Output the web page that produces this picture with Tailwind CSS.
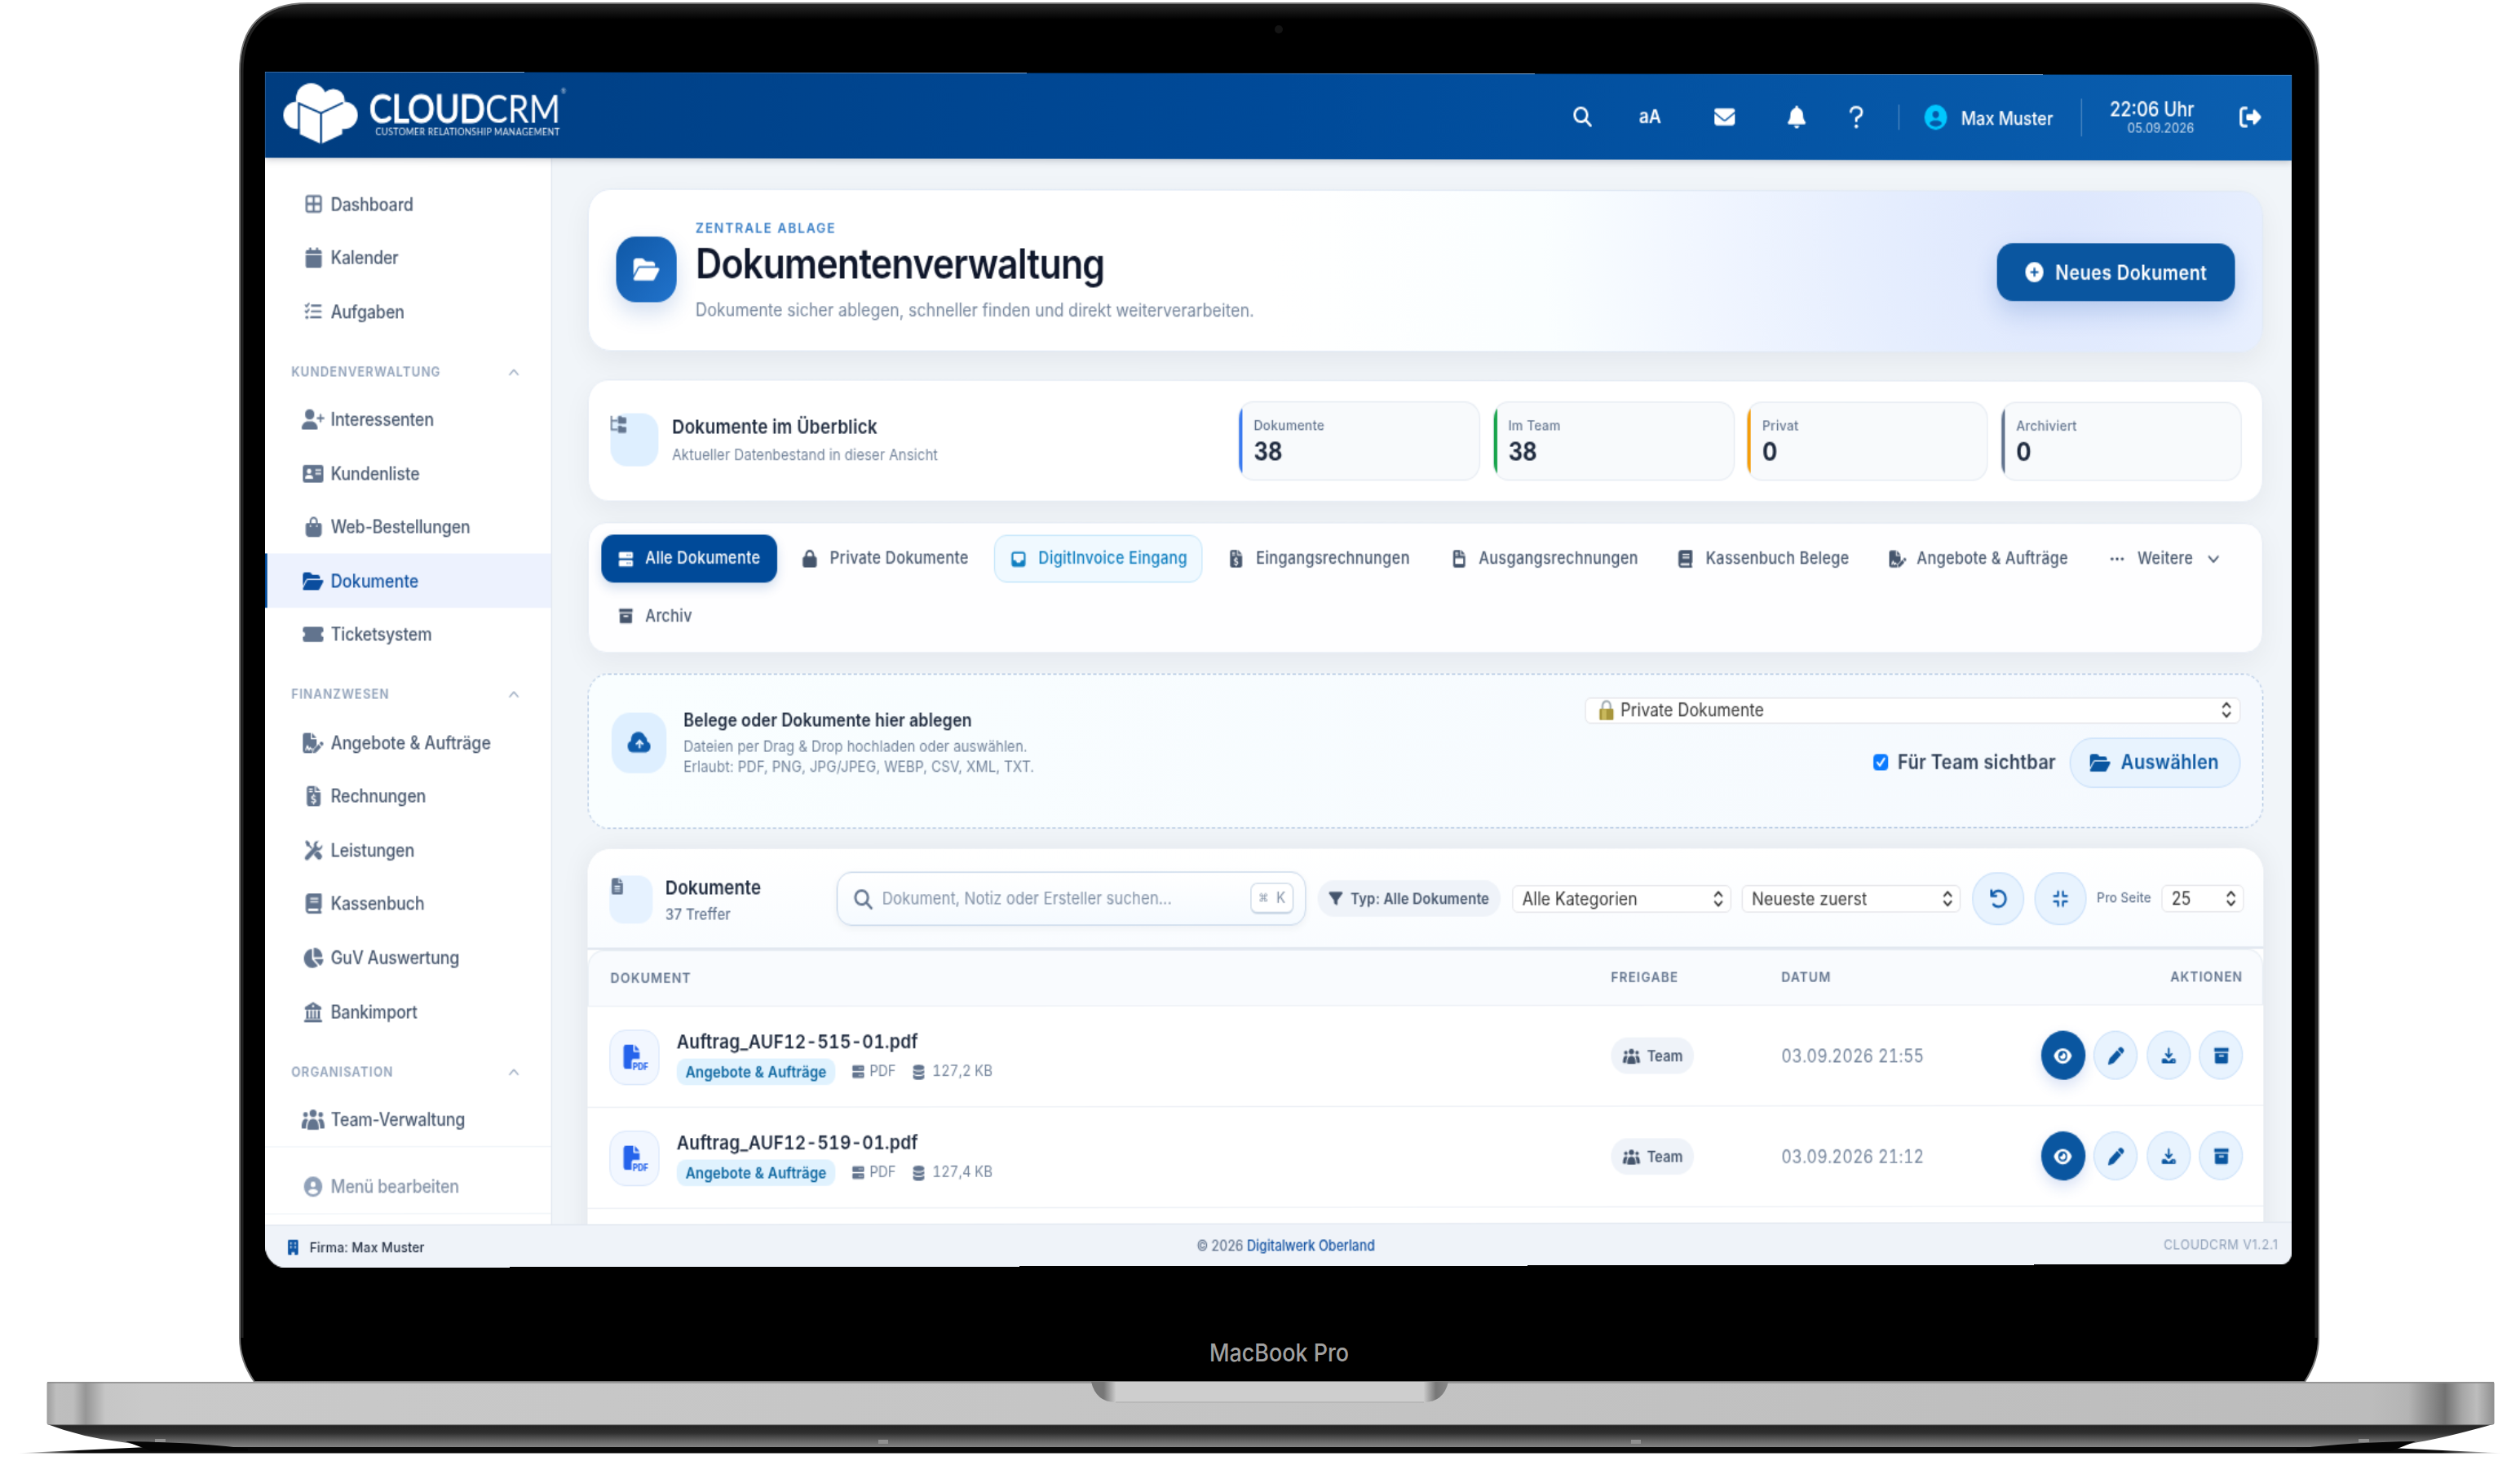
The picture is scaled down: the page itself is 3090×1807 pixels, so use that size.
<!DOCTYPE html>
<html lang="de">
<head>
    <meta charset="UTF-8">
    <meta name="viewport" content="width=device-width, initial-scale=1.0">
    <title>CloudCRM - Dokumentenverwaltung</title>
    <script src="https://cdn.jsdelivr.net/npm/@tailwindcss/browser@4"></script>
</head>
<body class="relative w-[3090px] h-[1807px] overflow-hidden bg-white font-['Inter',sans-serif]">

    <!-- ICONS -->
    <svg class="hidden">
        <symbol id="i-grid" viewBox="0 0 16 16"><path fill="none" stroke="currentColor" stroke-width="1.9" d="M2.6 1.4h10.8a1.2 1.2 0 0 1 1.2 1.2v10.8a1.2 1.2 0 0 1-1.2 1.2H2.6a1.2 1.2 0 0 1-1.2-1.2V2.6a1.2 1.2 0 0 1 1.2-1.2zM8 1.4v13.2M1.4 8h13.2"/></symbol>
        <symbol id="i-calendar" viewBox="0 0 448 512"><path fill="currentColor" d="M96 32V64H48C21.5 64 0 85.5 0 112v48H448V112c0-26.5-21.5-48-48-48H352V32c0-17.7-14.3-32-32-32s-32 14.3-32 32V64H160V32c0-17.7-14.3-32-32-32S96 14.3 96 32zM448 192H0V464c0 26.5 21.5 48 48 48H400c26.5 0 48-21.5 48-48V192z"/></symbol>
        <symbol id="i-tasks" viewBox="0 0 16 16"><path fill="none" stroke="currentColor" stroke-width="1.8" stroke-linecap="round" stroke-linejoin="round" d="M6.8 3h8.3M6.8 8h8.3M6 13h9.1"/><path fill="none" stroke="currentColor" stroke-width="1.4" stroke-linecap="round" stroke-linejoin="round" d="M.8 2.8l1.2 1.2 2-2.6M.8 7.8L2 9l2-2.6"/><circle cx="2.2" cy="13" r="1.3" fill="currentColor"/></symbol>
        <symbol id="i-userplus" viewBox="0 0 640 512"><path fill="currentColor" d="M96 128a128 128 0 1 1 256 0A128 128 0 1 1 96 128zM0 482.3C0 383.8 79.8 304 178.3 304h91.4C368.2 304 448 383.8 448 482.3c0 16.4-13.3 29.7-29.7 29.7H29.7C13.3 512 0 498.7 0 482.3zM504 312V248H440c-13.3 0-24-10.7-24-24s10.7-24 24-24h64V136c0-13.3 10.7-24 24-24s24 10.7 24 24v64h64c13.3 0 24 10.7 24 24s-10.7 24-24 24H552v64c0 13.3-10.7 24-24 24s-24-10.7-24-24z"/></symbol>
        <symbol id="i-card" viewBox="0 0 576 512"><path fill="currentColor" fill-rule="evenodd" d="M64 32C28.7 32 0 60.7 0 96V416c0 35.3 28.7 64 64 64H512c35.3 0 64-28.7 64-64V96c0-35.3-28.7-64-64-64H64zm80 256h64c44.2 0 80 35.8 80 80c0 8.8-7.2 16-16 16H80c-8.8 0-16-7.2-16-16c0-44.2 35.8-80 80-80zm-32-96a64 64 0 1 1 128 0 64 64 0 1 1 -128 0zM352 144H512V186H352zM352 230H512V272H352z"/></symbol>
        <symbol id="i-bag" viewBox="0 0 448 512"><path fill="currentColor" fill-rule="evenodd" d="M160 112c0-35.3 28.7-64 64-64s64 28.7 64 64v48H160V112zm-48 48H48c-26.5 0-48 21.5-48 48V416c0 53 43 96 96 96H352c53 0 96-43 96-96V208c0-26.5-21.5-48-48-48H336V112C336 50.1 285.9 0 224 0S112 50.1 112 112v48zm24 48a24 24 0 1 1 0 48 24 24 0 1 1 0-48zm152 24a24 24 0 1 1 48 0 24 24 0 1 1 -48 0z"/></symbol>
        <symbol id="i-folder" viewBox="0 0 576 512"><path fill="currentColor" d="M88.7 223.8L0 375.8V96C0 60.7 28.7 32 64 32H181.5c17 0 33.3 6.7 45.3 18.7l26.5 26.5c12 12 28.3 18.7 45.3 18.7H416c35.3 0 64 28.7 64 64v32H144c-22.8 0-43.8 12.1-55.3 31.8zm27.6 16.1C122.1 230 132.6 224 144 224H544c11.5 0 22 6.1 27.7 16.1s5.7 22.2-.1 32.1l-112 192C453.9 474 443.4 480 432 480H32c-11.5 0-22-6.1-27.7-16.1s-5.7-22.2 .1-32.1l112-192z"/></symbol>
        <symbol id="i-ticket" viewBox="0 0 576 512"><path fill="currentColor" d="M0 128a64 64 0 0 1 64-64H512a64 64 0 0 1 64 64v64a64 64 0 0 0 0 128v64a64 64 0 0 1-64 64H64a64 64 0 0 1-64-64V320a64 64 0 0 0 0-128z"/></symbol>
        <symbol id="i-filesign" viewBox="0 0 576 512"><path fill="currentColor" fill-rule="evenodd" d="M64 0C28.7 0 0 28.7 0 64V448c0 35.3 28.7 64 64 64H262l24-96 98-100V160H224V0zM256 0V128H384zM64 436l44-110c8-20 34-20 42 0l26 66 12-18c10-14 32-14 42 2l14 22h40v34h-60l-16-24-22 34c-8 12-28 10-34-4l-26-64-24 62z"/><path fill="currentColor" d="M549.8 235.7l14.4 14.4c15.6 15.6 15.6 40.9 0 56.6l-29.4 29.4-71-71 29.4-29.4c15.6-15.6 40.9-15.6 56.6 0zM311.9 417L441.1 287.8l71 71L382.9 487.9c-4.1 4.1-9.2 7-14.9 8.4l-60.1 15c-5.5 1.4-11.2-.2-15.2-4.2s-5.6-9.7-4.2-15.2l15-60.1c1.4-5.6 4.3-10.8 8.4-14.9z"/></symbol>
        <symbol id="i-invoice" viewBox="0 0 384 512"><path fill="currentColor" fill-rule="evenodd" d="M64 0C28.7 0 0 28.7 0 64V448c0 35.3 28.7 64 64 64H320c35.3 0 64-28.7 64-64V160H224V0zM256 0V128H384zM64 64H160V96H64zM64 128H160V160H64zM174 208H210V236C232 239 246 244 254 248L244 282C226 274 206 270 190 270C164 270 154 290 172 302C186 312 262 316 262 374C262 408 238 426 210 432V462H174V433C152 430 134 424 120 418L130 384C150 392 170 398 190 398C222 398 230 374 210 362C192 352 122 346 122 292C122 262 144 243 174 237z"/></symbol>
        <symbol id="i-invoice2" viewBox="0 0 384 512"><path fill="currentColor" fill-rule="evenodd" d="M64 0C28.7 0 0 28.7 0 64V448c0 35.3 28.7 64 64 64H320c35.3 0 64-28.7 64-64V160H224V0zM256 0V128H384zM64 64H160V96H64zM64 128H160V160H64zM64 240H320V400H64z"/></symbol>
        <symbol id="i-tools" viewBox="0 0 512 512"><path fill="currentColor" d="M20 30L62 0l86 66v52l92 92c38-10 80 0 106 28l124 124c26 26 26 68 0 94l-14 14c-26 26-68 26-94 0L238 346c-28-28-38-68-28-106l-92-92H66z"/><path fill="currentColor" stroke="#fff" stroke-width="22" d="M498 104l-74 74-66-18-18-66 76-76c-60-28-134 0-160 60-12 28-14 60-4 90L24 390c-32 32-32 74-4 102s72 28 102-4l220-222c104 26 192-72 156-162z"/></symbol>
        <symbol id="i-book" viewBox="0 0 448 512"><path fill="currentColor" fill-rule="evenodd" d="M96 0C43 0 0 43 0 96V416c0 53 43 96 96 96H384h32c17.7 0 32-14.3 32-32s-14.3-32-32-32V384c17.7 0 32-14.3 32-32V32c0-17.7-14.3-32-32-32H384 96zm0 384H352v64H96c-17.7 0-32-14.3-32-32s14.3-32 32-32zM128 112H352V150H128zM128 196H352V234H128z"/></symbol>
        <symbol id="i-pie" viewBox="0 0 576 512"><path fill="currentColor" d="M304 240V16.6c0-9 7-16.6 16-16.6C443.7 0 544 100.3 544 224c0 9-7.6 16-16.6 16H304zM32 272C32 150.7 122.1 50.3 239 34.3c9.2-1.3 17 6.1 17 15.4V288L412.5 444.5c6.7 6.7 6.2 17.7-1.5 23.1C371.8 495.6 323.8 512 272 512C139.5 512 32 404.6 32 272zm526.4 16c9.3 0 16.6 7.8 15.4 17c-7.7 55.9-34.6 105.6-73.9 142.3c-6 5.6-15.4 5.2-21.2-.7L320 288H558.4z"/></symbol>
        <symbol id="i-bank" viewBox="0 0 16 16"><path fill="currentColor" fill-rule="evenodd" d="M8 0l7.2 4v1.9H.8V4zM8 2.2a1 1 0 1 0 0 2 1 1 0 1 0 0-2zM2 6.5h2v6h1.5v-6h1.8v6h1.4v-6h1.8v6H12v-6h2v6l1 1H1l1-1zM.3 14h15.4v2H.3z"/></symbol>
        <symbol id="i-users" viewBox="0 0 20 16"><g fill="currentColor"><circle cx="10" cy="3" r="3"/><circle cx="3.4" cy="4" r="2.1"/><circle cx="16.6" cy="4" r="2.1"/><path d="M6 16c-.7 0-1-.4-1-1.2C5 10.2 6.8 7.3 10 7.3s5 2.9 5 7.5c0 .8-.3 1.2-1 1.2zM0 14.2C0 9.8 1.4 7.3 3.6 7.3c.8 0 1.5.3 2.1.8C4.4 9.8 3.8 12.2 3.8 15H.8c-.5 0-.8-.3-.8-.8zM20 14.2c0-4.4-1.4-6.9-3.6-6.9-.8 0-1.5.3-2.1.8 1.3 1.7 1.9 4.1 1.9 6.9h3c.5 0 .8-.3.8-.8z"/></g></symbol>
        <symbol id="i-user" viewBox="0 0 512 512"><path fill="currentColor" fill-rule="evenodd" d="M399 384.2C376.9 345.8 335.4 320 288 320H224c-47.4 0-88.9 25.8-111 64.2c35.2 39.2 86.2 63.8 143 63.8s107.8-24.7 143-63.8zM0 256a256 256 0 1 1 512 0A256 256 0 1 1 0 256zm256 16a72 72 0 1 0 0-144 72 72 0 1 0 0 144z"/></symbol>
        <symbol id="i-search" viewBox="0 0 512 512"><path fill="currentColor" fill-rule="evenodd" d="M416 208c0 45.9-14.9 88.3-40 122.7L502.6 457.4c12.5 12.5 12.5 32.8 0 45.3s-32.8 12.5-45.3 0L330.7 376c-34.4 25.2-76.8 40-122.7 40C93.1 416 0 322.9 0 208S93.1 0 208 0S416 93.1 416 208zM208 352a144 144 0 1 0 0-288 144 144 0 1 0 0 288z"/></symbol>
        <symbol id="i-mail" viewBox="0 0 512 512"><path fill="currentColor" d="M48 64C21.5 64 0 85.5 0 112c0 15.1 7.1 29.3 19.2 38.4L236.8 313.6c11.4 8.5 27 8.5 38.4 0L492.8 150.4c12.1-9.1 19.2-23.3 19.2-38.4c0-26.5-21.5-48-48-48H48zM0 176V384c0 35.3 28.7 64 64 64H448c35.3 0 64-28.7 64-64V176L294.4 339.2c-22.8 17.1-54 17.1-76.8 0L0 176z"/></symbol>
        <symbol id="i-bell" viewBox="0 0 448 512"><path fill="currentColor" d="M224 0c-17.7 0-32 14.3-32 32V51.2C119 66 64 130.6 64 208v18.8c0 47-17.3 92.4-48.5 127.6l-7.4 8.3c-8.4 9.4-10.4 22.9-5.3 34.4S19.4 416 32 416H416c12.6 0 24-7.4 29.2-18.9s3.1-25-5.3-34.4l-7.4-8.3C401.3 319.2 384 273.9 384 226.8V208c0-77.4-55-142-128-156.8V32c0-17.7-14.3-32-32-32zm45.3 493.3c12-12 18.7-28.3 18.7-45.3H224 160c0 17 6.7 33.3 18.7 45.3s28.3 18.7 45.3 18.7s33.3-6.7 45.3-18.7z"/></symbol>
        <symbol id="i-question" viewBox="0 0 12 18"><path fill="none" stroke="currentColor" stroke-width="2.1" stroke-linecap="round" stroke-linejoin="round" d="M1.2 4.8C1.2 2.6 3 1.2 5 1.2h1.6c2.3 0 4.2 1.5 4.2 3.8 0 1.6-.9 2.7-2.2 3.4L6 10v2"/><circle cx="6" cy="16.2" r="1.5" fill="currentColor"/></symbol>
        <symbol id="i-logout" viewBox="0 0 512 512"><path fill="currentColor" d="M377.9 105.9L500.7 228.7c7.2 7.2 11.3 17.1 11.3 27.3s-4.1 20.1-11.3 27.3L377.9 406.1c-6.4 6.4-15 9.9-24 9.9c-18.7 0-33.9-15.2-33.9-33.9l0-62.1-128 0c-17.7 0-32-14.3-32-32l0-64c0-17.7 14.3-32 32-32l128 0 0-62.1c0-18.7 15.2-33.9 33.9-33.9c9 0 17.6 3.6 24 9.9zM160 96L96 96c-17.7 0-32 14.3-32 32l0 256c0 17.7 14.3 32 32 32l64 0c17.7 0 32 14.3 32 32s-14.3 32-32 32l-64 0c-53 0-96-43-96-96L0 128C0 75 43 32 96 32l64 0c17.7 0 32 14.3 32 32s-14.3 32-32 32z"/></symbol>
        <symbol id="i-plus" viewBox="0 0 16 16"><path fill="currentColor" fill-rule="evenodd" d="M8 0a8 8 0 1 0 0 16A8 8 0 1 0 8 0zM7.2 4.5h1.6v2.7h2.7v1.6H8.8v2.7H7.2V8.8H4.5V7.2h2.7z"/></symbol>
        <symbol id="i-tree" viewBox="0 0 16 16"><path fill="none" stroke="currentColor" stroke-width="1.4" d="M1 0v12.4h6M1 4.3h6"/><path fill="currentColor" d="M7.5 1.2c0-.5.3-.8.8-.8h2.5l1 1.1H15c.5 0 .8.3.8.8v4c0 .5-.3.8-.8.8H8.3c-.5 0-.8-.3-.8-.8zM7.5 9.6c0-.5.3-.8.8-.8h2.5l1 1.1H15c.5 0 .8.3.8.8v4c0 .5-.3.8-.8.8H8.3c-.5 0-.8-.3-.8-.8z"/></symbol>
        <symbol id="i-server" viewBox="0 0 16 16"><path fill="currentColor" fill-rule="evenodd" d="M2 .8h12a1.5 1.5 0 0 1 1.5 1.5v3.4A1.5 1.5 0 0 1 14 7.2H2A1.5 1.5 0 0 1 .5 5.7V2.3A1.5 1.5 0 0 1 2 .8zM2 8.8h12a1.5 1.5 0 0 1 1.5 1.5v3.4a1.5 1.5 0 0 1-1.5 1.5H2a1.5 1.5 0 0 1-1.5-1.5v-3.4A1.5 1.5 0 0 1 2 8.8zM9 3.3v1.4h1.4V3.3zM11.8 3.3v1.4h1.4V3.3zM9 11.3v1.4h1.4v-1.4zM11.8 11.3v1.4h1.4v-1.4z"/></symbol>
        <symbol id="i-lock" viewBox="0 0 448 512"><path fill="currentColor" fill-rule="evenodd" d="M144 144v48H304V144c0-44.2-35.8-80-80-80s-80 35.8-80 80zM80 192V144C80 64.5 144.5 0 224 0s144 64.5 144 144v48h16c35.3 0 64 28.7 64 64V448c0 35.3-28.7 64-64 64H64c-35.3 0-64-28.7-64-64V256c0-35.3 28.7-64 64-64H80z"/></symbol>
        <symbol id="i-inbox" viewBox="0 0 16 16"><path fill="currentColor" fill-rule="evenodd" d="M3 .5h10A2.5 2.5 0 0 1 15.5 3v10a2.5 2.5 0 0 1-2.5 2.5H3A2.5 2.5 0 0 1 .5 13V3A2.5 2.5 0 0 1 3 .5zM3.2 2.5a.7.7 0 0 0-.7.7V9H5l1.3 2.3h3.4L11 9h2.5V3.2a.7.7 0 0 0-.7-.7z"/></symbol>
        <symbol id="i-archive" viewBox="0 0 16 16"><path fill="currentColor" fill-rule="evenodd" d="M.8.8h14.4v3.6H.8zM1.5 5.4h13v8.3a1.5 1.5 0 0 1-1.5 1.5H3a1.5 1.5 0 0 1-1.5-1.5zM5.5 7.3v1.6h5V7.3z"/></symbol>
        <symbol id="i-dots" viewBox="0 0 16 16"><g fill="currentColor"><circle cx="2" cy="8" r="1.7"/><circle cx="8" cy="8" r="1.7"/><circle cx="14" cy="8" r="1.7"/></g></symbol>
        <symbol id="i-down" viewBox="0 0 10 10"><path fill="none" stroke="currentColor" stroke-width="1.4" stroke-linecap="round" stroke-linejoin="round" d="M1 3l4 4.2L9 3"/></symbol>
        <symbol id="i-up" viewBox="0 0 10 10"><path fill="none" stroke="currentColor" stroke-width="1.2" stroke-linecap="round" stroke-linejoin="round" d="M1 7.2L5 3l4 4.2"/></symbol>
        <symbol id="i-updown" viewBox="0 0 10 16"><path fill="none" stroke="currentColor" stroke-width="1.7" stroke-linecap="round" stroke-linejoin="round" d="M1.5 5.5L5 1.8l3.5 3.7M1.5 10.5L5 14.2l3.5-3.7"/></symbol>
        <symbol id="i-cloud" viewBox="0 0 20 16"><path fill="currentColor" fill-rule="evenodd" d="M4.5 15.5A4.5 4.5 0 0 1 3 6.8 6 6 0 0 1 14.2 3.2a4 4 0 0 1 2 4 4.3 4.3 0 0 1-.7 8.3zM9.2 12.5h1.6V8.6l1.7 1.6 1-1.1L10 5.7 6.5 9.1l1 1.1 1.7-1.6z"/></symbol>
        <symbol id="i-file" viewBox="0 0 384 512"><path fill="currentColor" fill-rule="evenodd" d="M64 0C28.7 0 0 28.7 0 64V448c0 35.3 28.7 64 64 64H320c35.3 0 64-28.7 64-64V160H224V0zM256 0V128H384zM96 240H288V276H96zM96 310H288V346H96zM96 380H288V416H96z"/></symbol>
        <symbol id="i-filter" viewBox="0 0 512 512"><path fill="currentColor" d="M3.9 54.9C10.5 40.9 24.5 32 40 32H472c15.5 0 29.5 8.9 36.1 22.9s4.6 30.5-5.2 42.5L320 320.9V448c0 12.1-6.8 23.2-17.7 28.6s-23.8 4.3-33.5-3l-64-48c-8.1-6-12.8-15.5-12.8-25.6V320.9L9 97.3C-.7 85.4-2.8 68.8 3.9 54.9z"/></symbol>
        <symbol id="i-undo" viewBox="0 0 16 16"><path fill="none" stroke="currentColor" stroke-width="2" stroke-linecap="round" stroke-linejoin="round" d="M1.5 1.5v4.3h4.3M2 5.5a6.3 6.3 0 1 1 1.3 7"/></symbol>
        <symbol id="i-compress" viewBox="0 0 16 16"><path fill="none" stroke="currentColor" stroke-width="2" stroke-linecap="round" stroke-linejoin="round" d="M5.5 1.5v4h-4M10.5 1.5v4h4M5.5 14.5v-4h-4M10.5 14.5v-4h4"/></symbol>
        <symbol id="i-db" viewBox="0 0 14 16"><path fill="currentColor" d="M7 0c3.6 0 6.5 1.1 6.5 2.5v1C13.5 4.9 10.6 6 7 6S.5 4.9.5 3.5v-1C.5 1.1 3.4 0 7 0zM.5 5.5C2 6.7 4.4 7.2 7 7.2s5-.5 6.5-1.7v2.7C13.5 9.6 10.6 10.7 7 10.7S.5 9.6.5 8.2zM.5 10.3C2 11.5 4.4 12 7 12s5-.5 6.5-1.7v3.2C13.5 14.9 10.6 16 7 16S.5 14.9.5 13.5z"/></symbol>
        <symbol id="i-eye" viewBox="0 0 576 512"><path fill="currentColor" fill-rule="evenodd" d="M288 32c-80.8 0-145.5 36.8-192.6 80.6C48.6 156 17.3 208 2.5 243.7c-3.3 7.9-3.3 16.7 0 24.6C17.3 304 48.6 356 95.4 399.4C142.5 443.2 207.2 480 288 480s145.5-36.8 192.6-80.6c46.8-43.5 78.1-95.4 93-131.1c3.3-7.9 3.3-16.7 0-24.6c-14.9-35.7-46.2-87.7-93-131.1C433.5 68.8 368.8 32 288 32zM144 256a144 144 0 1 1 288 0 144 144 0 1 1 -288 0z"/><path fill="currentColor" d="M288 192c0 35.3-28.7 64-64 64c-7.1 0-13.9-1.2-20.3-3.3c-5.5-1.8-11.9 1.6-11.7 7.4c.3 6.9 1.3 13.8 3.2 20.7c13.7 51.2 66.4 81.6 117.6 67.9s81.6-66.4 67.9-117.6c-11.1-41.5-47.8-69.4-88.6-71.1c-5.8-.2-9.2 6.1-7.4 11.7c2.1 6.4 3.3 13.2 3.3 20.3z"/></symbol>
        <symbol id="i-pen" viewBox="0 0 512 512"><path fill="currentColor" d="M362.7 19.3L314.3 67.7 444.3 197.7l48.4-48.4c25-25 25-65.5 0-90.5L453.3 19.3c-25-25-65.5-25-90.5 0zm-71 71L58.6 323.5c-10.4 10.4-18 23.3-22.2 37.4L1 481.2C-1.5 489.7 .8 498.8 7 505s15.3 8.5 23.7 6.1l120.3-35.4c14.1-4.2 27-11.8 37.4-22.2L421.7 220.3 291.7 90.3z"/></symbol>
        <symbol id="i-download" viewBox="0 0 16 16"><path fill="none" stroke="currentColor" stroke-width="1.9" stroke-linecap="round" stroke-linejoin="round" d="M8 1v8M4.8 6.2L8 9.4l3.2-3.2"/><path fill="currentColor" fill-rule="evenodd" d="M2 10.8h2.8L8 13.4l3.2-2.6H14a1.5 1.5 0 0 1 1.5 1.5v1.7A1.5 1.5 0 0 1 14 15.5H2A1.5 1.5 0 0 1 .5 14v-1.7A1.5 1.5 0 0 1 2 10.8zM12.4 12.5v1.4h1.4v-1.4z"/></symbol>
        <symbol id="i-building" viewBox="0 0 12 16"><path fill="currentColor" fill-rule="evenodd" d="M1.5 0h9A1.5 1.5 0 0 1 12 1.5v13a1.5 1.5 0 0 1-1.5 1.5H7.7v-3H4.3v3H1.5A1.5 1.5 0 0 1 0 14.5v-13A1.5 1.5 0 0 1 1.5 0zM2.5 3v1.8h2V3zM7.5 3v1.8h2V3zM2.5 7v1.8h2V7zM7.5 7v1.8h2V7z"/></symbol>
        <symbol id="i-pdf" viewBox="0 0 20 20"><path fill="currentColor" d="M2 0h6.5v4.8a1 1 0 0 0 1 1h4.5v5.5H8.500A1.500 1.500 0 0 0 7 12.800V19H2a2 2 0 0 1-2-2V2a2 2 0 0 1 2-2zM9.800 0l4.200 4.500H9.800z"/></symbol>
    </svg>

    <!-- LAPTOP -->
    <svg class="absolute inset-0" width="3090" height="1807" viewBox="0 0 3090 1807">
        <defs>
            <linearGradient id="deck" gradientUnits="userSpaceOnUse" x1="57" y1="0" x2="3058" y2="0">
                <stop offset="0" stop-color="#9c9c9c"/><stop offset=".004" stop-color="#bebebe"/><stop offset=".011" stop-color="#bdbdbd"/><stop offset=".016" stop-color="#969696"/><stop offset=".024" stop-color="#c6c6c6"/><stop offset=".04" stop-color="#c9c9c9"/><stop offset=".5" stop-color="#c4c4c4"/><stop offset=".95" stop-color="#bcbcbc"/><stop offset=".965" stop-color="#b4b4b4"/><stop offset=".98" stop-color="#727272"/><stop offset=".987" stop-color="#a6a6a6"/><stop offset=".993" stop-color="#bdbdbd"/><stop offset="1" stop-color="#909090"/>
            </linearGradient>
            <linearGradient id="belly" x1="0" y1="0" x2="0" y2="1"><stop offset="0" stop-color="#505050"/><stop offset=".08" stop-color="#252525"/><stop offset=".35" stop-color="#2e2e2e"/><stop offset=".7" stop-color="#666"/><stop offset="1" stop-color="#8c8c8c"/></linearGradient>
            <linearGradient id="notch"><stop offset="0" stop-color="#777"/><stop offset=".035" stop-color="#777"/><stop offset=".07" stop-color="#cecece"/><stop offset=".93" stop-color="#cecece"/><stop offset=".965" stop-color="#777"/><stop offset="1" stop-color="#888"/></linearGradient>
            <linearGradient id="floor"><stop offset="0" stop-color="#000" stop-opacity="0"/><stop offset=".025" stop-color="#0a0a0a"/><stop offset=".975" stop-color="#0a0a0a"/><stop offset="1" stop-color="#000" stop-opacity="0"/></linearGradient>
            <linearGradient id="lid" x1="0" y1="0" x2="0" y2="1"><stop offset="0" stop-color="#2a2a2a"/><stop offset=".012" stop-color="#000"/></linearGradient>
        </defs>
        <path fill="url(#lid)" stroke="#777" stroke-width="2" d="M312 1694Q294 1668 294 1640V88Q294 4 378 4H2760Q2843 4 2843 88V1640Q2843 1668 2826 1694z"/>
        <path fill="none" stroke="#222" stroke-width="3" d="M297 1640V88Q297 7 378 7H2760Q2840 7 2840 88V1640"/>
        <circle cx="1568" cy="36" r="5" fill="#141414"/>
        <path fill="url(#belly)" d="M58 1746H3057Q3000 1762 2965 1768L2925 1776H200L150 1768Q100 1762 58 1746z"/>
        <path fill="url(#floor)" d="M20 1781.5L180 1774H2910L3070 1781.5z"/>
        <path fill="#050505" d="M154 1767Q240 1768 304 1776V1779H186zM2962 1767Q2880 1768 2816 1776V1779H2932z"/>
        <rect x="57.5" y="1694" width="3001" height="52.5" rx="2" fill="url(#deck)"/>
        <path stroke="#8a8a8a" stroke-width="1.5" d="M58 1695H3058"/>
        <path fill="url(#notch)" d="M1338 1694H1776Q1770 1719 1746 1719H1368Q1344 1719 1338 1694z"/>
        <path stroke="#b4b4b4" stroke-width="1.5" d="M1368 1719H1746"/>
        <g fill="#8f8f8f"><rect x="190" y="1764" width="13" height="4"/><rect x="1077" y="1765" width="12" height="5"/><rect x="2000" y="1765" width="12" height="5"/><rect x="2892" y="1764" width="13" height="4"/></g>
        <text x="1483" y="1669" font-size="30" font-weight="500" fill="#a0a0a0" textLength="171" lengthAdjust="spacingAndGlyphs" class="font-['Inter',sans-serif]">MacBook Pro</text>
    </svg>

    <!-- SCREEN -->
    <div class="absolute left-[325px] top-[88px] w-[1780px] h-[946px] origin-top-left [transform:matrix3d(1.40374,0.0022595,0,0.000003084,0,1.54968,0,0,0,0,1,0,0,0,0,1)] overflow-hidden rounded-bl-[18px] rounded-br-[9px] bg-[#f1f5f9] flex flex-col text-slate-800">

        <!-- HEADER -->
        <header class="relative z-10 h-[68px] shrink-0 flex items-center pl-4 pr-[26px] text-white bg-gradient-to-r from-[#003d80] via-[#004a99] to-[#0b5fb0] shadow-[0_1px_6px_rgba(15,23,42,0.25)]">
            <svg class="mb-[2px] w-[65px] h-[48px]" viewBox="0 0 91 75" preserveAspectRatio="none">
                <g fill="#fff"><ellipse cx="34" cy="19" rx="18.500" ry="19"/><ellipse cx="61" cy="21" rx="14" ry="14"/><ellipse cx="17" cy="39.500" rx="17" ry="17"/><ellipse cx="74" cy="39.500" rx="17" ry="17"/><path d="M19 20H72V63L46 75 20 63z"/></g>
                <path fill="none" stroke="#003f84" stroke-width="2.400" d="M19 62V25L46 37 73 24M46 37V75"/>
            </svg>
            <svg class="ml-[10px] w-[190px] h-[48px] overflow-visible" viewBox="0 -2 190 48" font-family="Lato, sans-serif" fill="#fff">
                <text x="0" y="28" font-size="31.500" textLength="167" lengthAdjust="spacingAndGlyphs"><tspan stroke="#fff" stroke-width="1">CLOUD</tspan><tspan>CRM</tspan></text>
                <text x="167.500" y="5" font-size="6" opacity=".7">®</text>
                <text x="5.500" y="37.600" font-size="7.600" opacity=".9" textLength="161" lengthAdjust="spacing">CUSTOMER RELATIONSHIP MANAGEMENT</text>
            </svg>
            <div class="ml-auto flex items-center">
                <span class="w-[51px] flex justify-center"><svg class="w-4 h-4"><use href="#i-search"/></svg></span>
                <span class="w-[69px] text-center text-[15px] font-semibold">aA</span>
                <span class="w-[61px] flex justify-center"><svg class="w-[18px] h-[18px]"><use href="#i-mail"/></svg></span>
                <span class="w-[66px] flex justify-center"><svg class="w-[17px] h-[18px]"><use href="#i-bell"/></svg></span>
                <span class="w-[39px] flex justify-center"><svg class="w-3 h-[18px]"><use href="#i-question"/></svg></span>
                <span class="ml-[18px] h-5 w-px bg-white/25"></span>
                <svg class="ml-[22px] w-[20px] h-[20px] text-[#00c8ff]"><use href="#i-user"/></svg>
                <span class="ml-[12.5px] pt-[2px] w-[80px] text-[14.3px] font-medium whitespace-nowrap">Max Muster</span>
                <span class="ml-[25.5px] h-[30px] w-px bg-white/25"></span>
                <div class="w-[99px] text-right leading-none mt-px whitespace-nowrap">
                    <div class="text-[15.5px] font-medium">22:06 Uhr</div>
                    <div class="mt-[3px] text-[10.8px] text-white/75">05.09.2026</div>
                </div>
                <svg class="ml-[39px] w-[21px] h-[19px]"><use href="#i-logout"/></svg>
            </div>
        </header>

        <div class="flex h-[844px] shrink-0 overflow-hidden">
            <!-- SIDEBAR -->
            <aside class="w-[251px] shrink-0 bg-white border-r border-slate-200 pt-[15.3px] text-sm font-medium text-slate-600 tracking-[-0.008em]">
                <a class="h-[42.6px] pl-8 flex items-center gap-[5.5px]"><span class="w-5 flex justify-center text-slate-500"><svg class="w-[15px] h-[15px]"><use href="#i-grid"/></svg></span>Dashboard</a>
                <a class="h-[42.6px] pl-8 flex items-center gap-[5.5px]"><span class="w-5 flex justify-center text-slate-500"><svg class="w-[15px] h-[16px]"><use href="#i-calendar"/></svg></span>Kalender</a>
                <a class="h-[42.6px] pl-8 flex items-center gap-[5.5px]"><span class="w-5 flex justify-center text-slate-500"><svg class="w-[16px] h-[15px]"><use href="#i-tasks"/></svg></span>Aufgaben</a>
                <div class="h-[42.6px] pl-[23px] pr-[28px] pt-[10px] flex items-center justify-between text-[10.5px] font-semibold tracking-[0.07em] text-slate-400">KUNDENVERWALTUNG<svg class="w-[9px] h-[9px]"><use href="#i-up"/></svg></div>
                <a class="h-[42.6px] pl-8 flex items-center gap-[5.5px]"><span class="w-5 flex justify-center text-slate-500"><svg class="w-[20px] h-[16px]"><use href="#i-userplus"/></svg></span>Interessenten</a>
                <a class="h-[42.6px] pl-8 flex items-center gap-[5.5px]"><span class="w-5 flex justify-center text-slate-500"><svg class="w-[18px] h-[16px]"><use href="#i-card"/></svg></span>Kundenliste</a>
                <a class="h-[42.6px] pl-8 flex items-center gap-[5.5px]"><span class="w-5 flex justify-center text-slate-500"><svg class="w-[15px] h-[16px]"><use href="#i-bag"/></svg></span>Web-Bestellungen</a>
                <a class="h-[42.6px] pl-[30px] border-l-2 border-[#004a99] bg-[#edf2fe] flex items-center gap-[5.5px] text-[#0a4d9e] tracking-normal"><span class="w-5 flex justify-center"><svg class="w-[18px] h-[16px]"><use href="#i-folder"/></svg></span>Dokumente</a>
                <a class="h-[42.6px] pl-8 flex items-center gap-[5.5px]"><span class="w-5 flex justify-center text-slate-500"><svg class="w-[18px] h-[16px]"><use href="#i-ticket"/></svg></span>Ticketsystem</a>
                <div class="h-[42.6px] pl-[23px] pr-[28px] pt-[10px] flex items-center justify-between text-[10.5px] font-semibold tracking-[0.07em] text-slate-400">FINANZWESEN<svg class="w-[9px] h-[9px]"><use href="#i-up"/></svg></div>
                <a class="h-[42.6px] pl-8 flex items-center gap-[5.5px]"><span class="w-5 flex justify-center text-slate-500"><svg class="w-[18px] h-[16px]"><use href="#i-filesign"/></svg></span><span class="tracking-normal">Angebote &amp; Aufträge</span></a>
                <a class="h-[42.6px] pl-8 flex items-center gap-[5.5px]"><span class="w-5 flex justify-center text-slate-500"><svg class="w-[13px] h-[16px]"><use href="#i-invoice"/></svg></span>Rechnungen</a>
                <a class="h-[42.6px] pl-8 flex items-center gap-[5.5px]"><span class="w-5 flex justify-center text-slate-500"><svg class="w-[17px] h-[16px]"><use href="#i-tools"/></svg></span>Leistungen</a>
                <a class="h-[42.6px] pl-8 flex items-center gap-[5.5px]"><span class="w-5 flex justify-center text-slate-500"><svg class="w-[15px] h-[16px]"><use href="#i-book"/></svg></span>Kassenbuch</a>
                <a class="h-[42.6px] pl-8 flex items-center gap-[5.5px]"><span class="w-5 flex justify-center text-slate-500"><svg class="w-[18px] h-[16px]"><use href="#i-pie"/></svg></span>GuV Auswertung</a>
                <a class="h-[42.6px] pl-8 flex items-center gap-[5.5px]"><span class="w-5 flex justify-center text-slate-500"><svg class="w-[16px] h-[16px]"><use href="#i-bank"/></svg></span>Bankimport</a>
                <div class="h-[42.6px] pl-[23px] pr-[28px] pt-[10px] flex items-center justify-between text-[10.5px] font-semibold tracking-[0.07em] text-slate-400">ORGANISATION<svg class="w-[9px] h-[9px]"><use href="#i-up"/></svg></div>
                <a class="h-[42.6px] pl-8 flex items-center gap-[5.5px]"><span class="w-5 flex justify-center text-slate-500"><svg class="w-[20px] h-[16px]"><use href="#i-users"/></svg></span>Team-Verwaltung</a>
                <div class="h-[54px] pl-8 pt-[10px] border-y border-slate-100 flex items-center gap-[5.5px] text-slate-400"><span class="w-5 flex justify-center"><svg class="w-[16px] h-[16px]"><use href="#i-user"/></svg></span><span class="text-slate-500/80">Menü bearbeiten</span></div>
            </aside>

            <!-- CONTENT -->
            <main class="flex-1 pl-[31px] pr-[25px] pt-[24px]">
                <!-- Titel -->
                <section class="h-[128.5px] px-[24px] rounded-[20px] border border-[#e2eaf5] flex items-center bg-[radial-gradient(circle_at_88%_30%,#dce6fd_0,#e6eefe_170px,#f1f6ff_320px,#fafeff_460px,#fff_700px)] shadow-[0_8px_24px_rgba(15,23,42,0.06)]">
                    <div class="w-[53px] h-[52px] rounded-[17px] bg-gradient-to-br from-[#0f58a6] to-[#2173cc] text-white flex items-center justify-center shadow-[0_8px_18px_rgba(30,90,180,0.2)]"><svg class="w-[23px] h-[20px]"><use href="#i-folder"/></svg></div>
                    <div class="ml-[16.5px] pt-px">
                        <div class="text-[11px] leading-[14px] font-semibold tracking-[0.115em] text-[#3a7fc6]">ZENTRALE ABLAGE</div>
                        <h1 class="mt-[4.5px] text-[32px] leading-[36px] font-semibold tracking-[-0.02em] text-slate-900">Dokumentenverwaltung</h1>
                        <p class="mt-[8px] text-[14px] leading-[20px] tracking-[0.004em] text-slate-500/90">Dokumente sicher ablegen, schneller finden und direkt weiterverarbeiten.</p>
                    </div>
                    <button class="mt-[2px] ml-auto w-[210px] h-[46px] rounded-[14px] bg-[#0a56a0] text-white text-[15.5px] font-semibold tracking-[0.022em] flex items-center justify-center gap-[11px] shadow-[0_9px_20px_rgba(20,80,180,0.2)]"><svg class="w-4 h-4"><use href="#i-plus"/></svg>Neues Dokument</button>
                </section>

                <!-- Überblick -->
                <section class="mt-[22.5px] h-[96.5px] pl-[19px] pr-[18px] rounded-[18px] border border-[#e6ecf4] bg-white flex items-center shadow-[0_8px_24px_rgba(15,23,42,0.05)]">
                    <div class="w-[42px] h-[42px] rounded-[14px] bg-[#deefff] text-slate-500"><svg class="mt-[2px] w-[14px] h-[14px]"><use href="#i-tree"/></svg></div>
                    <div class="ml-3">
                        <div class="text-[14.9px] leading-5 font-semibold tracking-[0.009em] text-slate-800">Dokumente im Überblick</div>
                        <div class="mt-[4px] text-[12px] leading-4 tracking-[0.005em] text-slate-500/90">Aktueller Datenbestand in dieser Ansicht</div>
                    </div>
                    <div class="ml-auto flex gap-[10.7px]">
                        <div class="w-[213px] h-[63px] pl-[13px] pt-px rounded-[14px] overflow-hidden relative bg-slate-50 border border-slate-200/80 flex flex-col justify-center"><i class="absolute left-[-1px] inset-y-[-1px] w-[4px] bg-[#3b7bf0]"></i><span class="text-[11px] leading-4 font-medium tracking-[0.02em] text-slate-500">Dokumente</span><b class="mt-px text-[19.5px] leading-[24px] font-bold text-slate-800">38</b></div>
                        <div class="w-[213px] h-[63px] pl-[13px] pt-px rounded-[14px] overflow-hidden relative bg-slate-50 border border-slate-200/80 flex flex-col justify-center"><i class="absolute left-[-1px] inset-y-[-1px] w-[4px] bg-[#16a34a]"></i><span class="text-[11px] leading-4 font-medium tracking-[0.02em] text-slate-500">Im Team</span><b class="mt-px text-[19.5px] leading-[24px] font-bold text-slate-800">38</b></div>
                        <div class="w-[213px] h-[63px] pl-[13px] pt-px rounded-[14px] overflow-hidden relative bg-slate-50 border border-slate-200/80 flex flex-col justify-center"><i class="absolute left-[-1px] inset-y-[-1px] w-[4px] bg-[#f59e0b]"></i><span class="text-[11px] leading-4 font-medium tracking-[0.02em] text-slate-500">Privat</span><b class="mt-px text-[19.5px] leading-[24px] font-bold text-slate-800">0</b></div>
                        <div class="w-[213px] h-[63px] pl-[13px] pt-px rounded-[14px] overflow-hidden relative bg-slate-50 border border-slate-200/80 flex flex-col justify-center"><i class="absolute left-[-1px] inset-y-[-1px] w-[4px] bg-slate-500"></i><span class="text-[11px] leading-4 font-medium tracking-[0.02em] text-slate-500">Archiviert</span><b class="mt-px text-[19.5px] leading-[24px] font-bold text-slate-800">0</b></div>
                    </div>
                </section>

                <!-- Tabs -->
                <nav class="mt-[16.5px] h-[103.5px] pt-[9px] pl-[10.5px] pr-[4px] rounded-[16px] border border-[#e6ecf4] bg-[#fefeff] flex flex-wrap content-start gap-[7.8px] text-[12.9px] font-medium tracking-[0.019em] text-slate-600 whitespace-nowrap shadow-[0_8px_24px_rgba(15,23,42,0.05)]">
                    <a class="w-[154px] h-[38px] pl-[15px] rounded-[11px] bg-[#004a99] text-white flex items-center shadow-[0_4px_10px_rgba(0,74,153,0.18)]"><svg class="w-[13px] h-[13px] mr-[11px]"><use href="#i-server"/></svg>Alle Dokumente</a>
                    <a class="w-[175px] h-[38px] pl-[15px] flex items-center"><svg class="w-[13px] h-[14px] mr-[11px]"><use href="#i-lock"/></svg>Private Dokumente</a>
                    <a class="w-[183px] h-[38px] pl-[14px] rounded-[11px] border border-[#c8e8fb] bg-[#f0f9ff] text-[#0f7fc0] flex items-center"><svg class="w-[13px] h-[13px] mr-[11px]"><use href="#i-inbox"/></svg>DigitInvoice Eingang</a>
                    <a class="w-[188px] h-[38px] pl-[15px] flex items-center"><svg class="w-[13px] h-[14px] mr-[11px]"><use href="#i-invoice"/></svg>Eingangsrechnungen</a>
                    <a class="w-[192px] h-[38px] pl-[15px] flex items-center"><svg class="w-[13px] h-[14px] mr-[11px]"><use href="#i-invoice2"/></svg>Ausgangsrechnungen</a>
                    <a class="w-[178px] h-[38px] pl-[15px] flex items-center"><svg class="w-[13px] h-[14px] mr-[11px]"><use href="#i-book"/></svg>Kassenbuch Belege</a>
                    <a class="w-[187px] h-[38px] pl-[15px] flex items-center"><svg class="w-[15px] h-[14px] mr-[9px]"><use href="#i-filesign"/></svg>Angebote &amp; Aufträge</a>
                    <a class="w-[125px] h-[38px] pl-[15px] flex items-center"><svg class="w-[12px] h-[12px] mr-[12px]"><use href="#i-dots"/></svg>Weitere<svg class="ml-[13px] w-[10px] h-[10px]"><use href="#i-down"/></svg></a>
                    <a class="w-[110px] h-[38px] pl-[15px] flex items-center"><svg class="w-[13px] h-[13px] mr-[11px]"><use href="#i-archive"/></svg>Archiv</a>
                </nav>

                <!-- Upload -->
                <section class="mt-[16.2px] h-[123px] pl-[20px] pr-[19.5px] rounded-[18px] border border-dashed border-[#b4c8e2] bg-gradient-to-r from-[#f9feff] to-[#f5f9fe] flex">
                    <div class="mt-[30px] w-[48px] h-[48px] rounded-[16px] bg-[#deefff] text-[#0f5cab] flex items-center justify-center"><svg class="w-[21px] h-[17px]"><use href="#i-cloud"/></svg></div>
                    <div class="ml-[15px] mt-[26.5px]">
                        <div class="text-[14px] leading-5 font-semibold tracking-[0.006em] text-slate-800">Belege oder Dokumente hier ablegen</div>
                        <div class="mt-[3px] text-[12px] leading-[15.7px] tracking-[0.006em] text-slate-500/90">Dateien per Drag &amp; Drop hochladen oder auswählen.<br>Erlaubt: PDF, PNG, JPG/JPEG, WEBP, CSV, XML, TXT.</div>
                    </div>
                    <div class="ml-auto mt-[18px] w-[578px]">
                        <div class="h-[21.5px] rounded-[5px] border border-[#e6e6ea] bg-white pl-[11px] pr-[7px] flex items-center text-sm tracking-[0.002em] text-[#333]">
                            <svg class="w-[14px] h-[16px] mr-[6px]" viewBox="0 0 14 16"><path fill="none" stroke="#9aa6ad" stroke-width="1.7" d="M3.5 8V4.5a3.5 3.5 0 0 1 7 0V8"/><rect x=".8" y="7" width="12.4" height="9" rx="1" fill="#a8963c"/><rect x="3" y="7.4" width="4" height="8.3" fill="#c9b85c"/></svg>
                            Private Dokumente<svg class="ml-auto w-[9px] h-[14px]"><use href="#i-updown"/></svg>
                        </div>
                        <div class="mt-[10.5px] flex items-center justify-end text-[15.7px] font-semibold text-slate-700">
                            <svg class="w-[13px] h-[13px]" viewBox="0 0 13 13"><rect width="13" height="13" rx="3.5" fill="#0a7aff"/><path fill="none" stroke="#fff" stroke-width="1.6" stroke-linecap="round" stroke-linejoin="round" d="M3.5 6.8l2.2 2.5 4-5.8"/></svg>
                            <span class="ml-[9px] w-[151px] tracking-[0.012em] whitespace-nowrap">Für Team sichtbar</span>
                            <button class="w-[151px] h-[40px] rounded-full border border-[#c9e0fa] bg-[#e8f3fe] text-[#0a56a0] tracking-[0.015em] flex items-center justify-center gap-[9px]"><svg class="w-[18px] h-[16px]"><use href="#i-folder"/></svg>Auswählen</button>
                        </div>
                    </div>
                </section>

                <!-- Dokumentenliste -->
                <section class="mt-[16.8px] h-[320px] rounded-t-[20px] bg-white shadow-[0_2px_24px_rgba(15,23,42,0.08)]">
                    <div class="h-[79.5px] pt-px pl-[19px] pr-[17px] rounded-t-[20px] bg-gradient-to-b from-white to-[#f9fcff] border-b-2 border-slate-200 flex items-center">
                        <div class="w-[38px] h-[38px] rounded-[12px] bg-[#e6f2ff] text-slate-500"><svg class="ml-[2px] mt-[2px] w-[10px] h-[13px]"><use href="#i-file"/></svg></div>
                        <div class="ml-[11px] w-[150px] pt-[2px]">
                            <div class="text-[15px] leading-5 font-semibold tracking-[0.005em] text-slate-800">Dokumente</div>
                            <div class="mt-[3px] text-[12px] leading-4 font-medium tracking-[0.01em] text-slate-500">37 Treffer</div>
                        </div>
                        <div class="w-[412px] h-[43px] pl-[14px] pr-[10px] rounded-[13px] border border-[#c9d8ea] bg-gradient-to-b from-white to-[#f5faff] flex items-center text-[13.2px] tracking-[0.005em] text-slate-500/80 shadow-[0_2px_6px_rgba(15,23,42,0.05)]">
                            <svg class="w-[17px] h-[16px] mr-[8px] text-slate-500"><use href="#i-search"/></svg>Dokument, Notiz oder Ersteller suchen...
                            <span class="ml-auto w-[38px] h-[25px] rounded-[6px] border border-[#cbd8e6] border-b-2 bg-white flex items-center justify-center gap-[7px] text-[12px]"><span class="text-[8.5px]">⌘</span>K</span>
                        </div>
                        <div class="ml-[10px] w-[161px] h-[29px] rounded-full bg-[#eff3f9] flex items-center justify-center gap-[7px] text-[12px] font-semibold tracking-[0.008em] text-slate-600 whitespace-nowrap"><svg class="w-[12px] h-[13px]"><use href="#i-filter"/></svg>Typ: Alle Dokumente</div>
                        <div class="ml-[10px] w-[193px] h-[22px] pl-[8px] pr-[6px] rounded-[5px] border border-[#e6e6ea] bg-white flex items-center justify-between text-sm tracking-[0.003em] text-[#333]">Alle Kategorien<svg class="w-[9px] h-[14px]"><use href="#i-updown"/></svg></div>
                        <div class="ml-[9px] w-[193px] h-[22px] pl-[8px] pr-[6px] rounded-[5px] border border-[#e6e6ea] bg-white flex items-center justify-between text-sm tracking-[0.005em] text-[#333]">Neueste zuerst<svg class="w-[9px] h-[14px]"><use href="#i-updown"/></svg></div>
                        <button class="ml-[10px] w-[46px] h-[42px] rounded-full border border-[#c9e0fa] bg-[#e8f3fe] text-[#0f5cab] flex items-center justify-center"><svg class="w-[17px] h-[16px]"><use href="#i-undo"/></svg></button>
                        <button class="ml-[9px] w-[46px] h-[42px] rounded-full border border-[#c9e0fa] bg-[#e8f3fe] text-[#0f5cab] flex items-center justify-center"><svg class="w-[14px] h-[14px]"><use href="#i-compress"/></svg></button>
                        <span class="ml-[9px] w-[49px] text-[11px] font-medium tracking-[0.01em] text-slate-500 whitespace-nowrap">Pro Seite</span>
                        <div class="ml-auto w-[73px] h-[22px] pl-[8px] pr-[6px] rounded-[5px] border border-[#e6e6ea] bg-white flex items-center justify-between text-sm text-[#333]">25<svg class="w-[9px] h-[14px]"><use href="#i-updown"/></svg></div>
                    </div>

                    <div class="h-[44.5px] px-[19px] rounded-t-[14px] border border-b-0 border-slate-200/70 bg-[#f9fbfe] flex items-center text-[11px] font-semibold tracking-[0.07em] text-slate-500">
                        <span class="w-[878px]">DOKUMENT</span><span class="w-[150px]">FREIGABE</span><span>DATUM</span><span class="ml-auto -mr-[2px]">AKTIONEN</span>
                    </div>

                    <div class="h-[80px] pl-[19px] pr-[18px] border-t border-slate-200/60 flex items-center tabular-nums">
                        <div class="relative w-[44px] h-[44px] rounded-[14px] border border-[#dbe8fb] bg-[#f2f7ff] text-[#2563eb]">
                            <svg class="absolute left-[11px] top-[11px] w-[21px] h-[20px]"><use href="#i-pdf"/></svg>
                            <span class="absolute left-[19.5px] top-[25px] text-[7px] leading-none font-extrabold">PDF</span>
                        </div>
                        <div class="ml-[15px] w-[820px]">
                            <div class="text-[15px] leading-5 font-semibold tracking-[0.01em] text-slate-800">Auftrag_AUF12-515-01.pdf</div>
                            <div class="mt-[3.5px] flex items-center text-[11.8px] text-slate-500/90">
                                <span class="w-[139px] h-[21px] rounded-[8px] bg-[#e0f2fe] text-[#0c66a0] text-[12px] font-semibold tracking-[0.008em] flex items-center justify-center whitespace-nowrap">Angebote &amp; Aufträge</span>
                                <svg class="ml-[14px] mr-[4px] w-[12px] h-[11px] text-slate-500"><use href="#i-server"/></svg>PDF
                                <svg class="ml-[14px] mr-[6px] w-[12px] h-[12px] text-slate-500"><use href="#i-db"/></svg>127,2 KB
                            </div>
                        </div>
                        <div class="w-[150px]"><span class="w-[73px] h-[29px] rounded-full bg-[#eff3f9] flex items-center justify-center gap-[6px] text-[11.9px] font-semibold text-slate-600"><svg class="w-[16px] h-[12px]"><use href="#i-users"/></svg>Team</span></div>
                        <span class="text-sm tracking-[0.008em] text-slate-500/90">03.09.2026 21:55</span>
                        <div class="ml-auto flex gap-[7.5px] text-[#0a56a0]">
                            <button class="w-[39px] h-[39px] rounded-full bg-[#0a56a0] text-white flex items-center justify-center shadow-[0_5px_12px_rgba(40,90,200,0.18)]"><svg class="w-[16px] h-[14px]"><use href="#i-eye"/></svg></button>
                            <button class="w-[39px] h-[39px] rounded-full border border-[#c9e0fa] bg-[#e8f3fe] flex items-center justify-center"><svg class="w-[14px] h-[14px]"><use href="#i-pen"/></svg></button>
                            <button class="w-[39px] h-[39px] rounded-full border border-[#c9e0fa] bg-[#e8f3fe] flex items-center justify-center"><svg class="w-[13px] h-[14px]"><use href="#i-download"/></svg></button>
                            <button class="w-[39px] h-[39px] rounded-full border border-[#c9e0fa] bg-[#e8f3fe] flex items-center justify-center"><svg class="w-[14px] h-[14px]"><use href="#i-archive"/></svg></button>
                        </div>
                    </div>

                    <div class="h-[80px] pl-[19px] pr-[18px] border-t border-slate-200/60 flex items-center tabular-nums">
                        <div class="relative w-[44px] h-[44px] rounded-[14px] border border-[#dbe8fb] bg-[#f2f7ff] text-[#2563eb]">
                            <svg class="absolute left-[11px] top-[11px] w-[21px] h-[20px]"><use href="#i-pdf"/></svg>
                            <span class="absolute left-[19.5px] top-[25px] text-[7px] leading-none font-extrabold">PDF</span>
                        </div>
                        <div class="ml-[15px] w-[820px]">
                            <div class="text-[15px] leading-5 font-semibold tracking-[0.01em] text-slate-800">Auftrag_AUF12-519-01.pdf</div>
                            <div class="mt-[3.5px] flex items-center text-[11.8px] text-slate-500/90">
                                <span class="w-[139px] h-[21px] rounded-[8px] bg-[#e0f2fe] text-[#0c66a0] text-[12px] font-semibold tracking-[0.008em] flex items-center justify-center whitespace-nowrap">Angebote &amp; Aufträge</span>
                                <svg class="ml-[14px] mr-[4px] w-[12px] h-[11px] text-slate-500"><use href="#i-server"/></svg>PDF
                                <svg class="ml-[14px] mr-[6px] w-[12px] h-[12px] text-slate-500"><use href="#i-db"/></svg>127,4 KB
                            </div>
                        </div>
                        <div class="w-[150px]"><span class="w-[73px] h-[29px] rounded-full bg-[#eff3f9] flex items-center justify-center gap-[6px] text-[11.9px] font-semibold text-slate-600"><svg class="w-[16px] h-[12px]"><use href="#i-users"/></svg>Team</span></div>
                        <span class="text-sm tracking-[0.008em] text-slate-500/90">03.09.2026 21:12</span>
                        <div class="ml-auto flex gap-[7.5px] text-[#0a56a0]">
                            <button class="w-[39px] h-[39px] rounded-full bg-[#0a56a0] text-white flex items-center justify-center shadow-[0_5px_12px_rgba(40,90,200,0.18)]"><svg class="w-[16px] h-[14px]"><use href="#i-eye"/></svg></button>
                            <button class="w-[39px] h-[39px] rounded-full border border-[#c9e0fa] bg-[#e8f3fe] flex items-center justify-center"><svg class="w-[14px] h-[14px]"><use href="#i-pen"/></svg></button>
                            <button class="w-[39px] h-[39px] rounded-full border border-[#c9e0fa] bg-[#e8f3fe] flex items-center justify-center"><svg class="w-[13px] h-[14px]"><use href="#i-download"/></svg></button>
                            <button class="w-[39px] h-[39px] rounded-full border border-[#c9e0fa] bg-[#e8f3fe] flex items-center justify-center"><svg class="w-[14px] h-[14px]"><use href="#i-archive"/></svg></button>
                        </div>
                    </div>
                    <div class="border-t border-slate-200/60"></div>
                </section>
            </main>
        </div>

        <!-- FOOTER -->
        <footer class="flex-1 pl-[20px] pr-[12px] pt-px border-t border-slate-200 bg-[#eff3f9] grid grid-cols-3 items-center text-[11px] font-medium">
            <div class="flex items-center gap-[10px] text-slate-800"><svg class="w-[9px] h-[12px] text-[#0f56a5]"><use href="#i-building"/></svg><span class="tracking-[0.012em]">Firma: Max Muster</span></div>
            <div class="text-center text-[11.2px] text-slate-500">© 2026 <span class="text-[#0f4fa0]">Digitalwerk Oberland</span></div>
            <div class="text-right font-normal tracking-[0.035em] text-slate-400">CLOUDCRM V1.2.1</div>
        </footer>
    </div>
</body>
</html>
